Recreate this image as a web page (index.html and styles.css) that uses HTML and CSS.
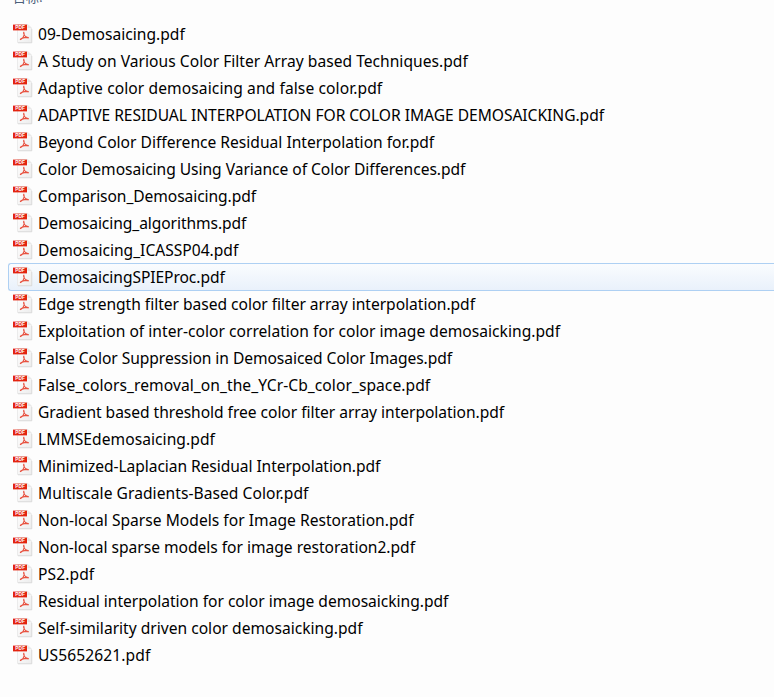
FILE: index.html
```
<!DOCTYPE html>
<html lang="en">
<head>
<meta charset="utf-8">
<title>Files</title>
<link rel="stylesheet" href="styles.css">
</head>
<body>
<svg width="0" height="0" class="defs">
  <defs>
    <linearGradient id="paper" x1="0" y1="0" x2="1" y2="1"><stop offset="0" stop-color="#fff"/><stop offset="1" stop-color="#ededed"/></linearGradient>
    <symbol id="pdf" viewBox="0 0 20 20">
      <path d="M4.5 .5H15L18.5 4V18.5H4.5Z" fill="url(#paper)" stroke="#ebebeb"/>
      <path d="M5 18.8H18.8V5" fill="none" stroke="#d4d4d4" stroke-width=".7"/>
      <path d="M14.5 .5V4H18.5Z" fill="#e6e6e6"/>
      <path d="M0 .6H14V6.4H0Z" fill="#e32410"/>
      <text x="2.3" y="5.2" class="tag">PDF</text>
      <path d="M10.8 8.2C12.2 11 9.8 14.4 7.6 15.6C6.3 15.3 10 13.2 15.2 13.4C16.2 14.6 12 13.4 10.9 10.2C10.4 9 10.4 8.4 10.8 8.2Z" fill="none" stroke="#e8503e" stroke-width="1.05"/>
    </symbol>
  </defs>
</svg>
<header class="heading">目标:</header>
<ul class="files">
  <li><svg class="icon"><use href="#pdf"/></svg><span>09-Demosaicing.pdf</span></li>
  <li><svg class="icon"><use href="#pdf"/></svg><span>A Study on Various Color Filter Array based Techniques.pdf</span></li>
  <li><svg class="icon"><use href="#pdf"/></svg><span>Adaptive color demosaicing and false color.pdf</span></li>
  <li><svg class="icon"><use href="#pdf"/></svg><span>ADAPTIVE RESIDUAL INTERPOLATION FOR COLOR IMAGE DEMOSAICKING.pdf</span></li>
  <li><svg class="icon"><use href="#pdf"/></svg><span>Beyond Color Difference Residual Interpolation for.pdf</span></li>
  <li><svg class="icon"><use href="#pdf"/></svg><span>Color Demosaicing Using Variance of Color Differences.pdf</span></li>
  <li><svg class="icon"><use href="#pdf"/></svg><span>Comparison_Demosaicing.pdf</span></li>
  <li><svg class="icon"><use href="#pdf"/></svg><span>Demosaicing_algorithms.pdf</span></li>
  <li><svg class="icon"><use href="#pdf"/></svg><span>Demosaicing_ICASSP04.pdf</span></li>
  <li class="selected"><svg class="icon"><use href="#pdf"/></svg><span>DemosaicingSPIEProc.pdf</span></li>
  <li><svg class="icon"><use href="#pdf"/></svg><span>Edge strength filter based color filter array interpolation.pdf</span></li>
  <li><svg class="icon"><use href="#pdf"/></svg><span>Exploitation of inter-color correlation for color image demosaicking.pdf</span></li>
  <li><svg class="icon"><use href="#pdf"/></svg><span>False Color Suppression in Demosaiced Color Images.pdf</span></li>
  <li><svg class="icon"><use href="#pdf"/></svg><span>False_colors_removal_on_the_YCr-Cb_color_space.pdf</span></li>
  <li><svg class="icon"><use href="#pdf"/></svg><span>Gradient based threshold free color filter array interpolation.pdf</span></li>
  <li><svg class="icon"><use href="#pdf"/></svg><span>LMMSEdemosaicing.pdf</span></li>
  <li><svg class="icon"><use href="#pdf"/></svg><span>Minimized-Laplacian Residual Interpolation.pdf</span></li>
  <li><svg class="icon"><use href="#pdf"/></svg><span>Multiscale Gradients-Based Color.pdf</span></li>
  <li><svg class="icon"><use href="#pdf"/></svg><span>Non-local Sparse Models for Image Restoration.pdf</span></li>
  <li><svg class="icon"><use href="#pdf"/></svg><span>Non-local sparse models for image restoration2.pdf</span></li>
  <li><svg class="icon"><use href="#pdf"/></svg><span>PS2.pdf</span></li>
  <li><svg class="icon"><use href="#pdf"/></svg><span>Residual interpolation for color image demosaicking.pdf</span></li>
  <li><svg class="icon"><use href="#pdf"/></svg><span>Self-similarity driven color demosaicking.pdf</span></li>
  <li><svg class="icon"><use href="#pdf"/></svg><span>US5652621.pdf</span></li>
</ul>
</body>
</html>
```
FILE: styles.css
```
* { box-sizing: border-box; }
body {
  margin: 0;
  height: 697px;
  overflow: hidden;
  background: #fdfdfd;
  color: #000;
  font: 15.6px/28px "Noto Sans", "Noto Sans CJK SC", sans-serif;
}
.defs { display: block; height: 0; }
.heading {
  display: flex;
  align-items: flex-end;
  height: 7px;
  margin-bottom: 13px;
  padding-left: 13px;
  overflow: hidden;
  color: #4c607a;
  font: 13px/20px "Noto Sans CJK SC", sans-serif;
}
.files { list-style: none; margin: 0; padding: 0 0 0 8px; }
.files li {
  height: 27px;
  display: flex;
  align-items: flex-start;
  padding-left: 5px;
  white-space: pre;
}
.icon { width: 20px; height: 20px; flex: none; margin: 4px 5px 0 0; }
.tag { font: bold 4.8px "Liberation Sans", sans-serif; fill: #fff; }
.files .selected {
  height: 28px;
  margin-bottom: -1px;
  padding-left: 4px;
  border: 1px solid #aed0f3;
  border-right: 0;
  border-radius: 3px 0 0 3px;
  background: linear-gradient(#fafcfe, #e9f1fb);
  line-height: 26px;
}
.selected .icon { margin-top: 3px; }

/* Per-name tracking */
li:nth-child(2), li:nth-child(12) { letter-spacing: .02px; }
li:nth-child(3) { letter-spacing: .09px; }
li:nth-child(4), li:nth-child(11) { letter-spacing: -.03px; }
li:nth-child(6), li:nth-child(15) { letter-spacing: -.04px; }
li:nth-child(7), li:nth-child(8) { letter-spacing: -.08px; }
li:nth-child(10), li:nth-child(17) { letter-spacing: -.07px; }
li:nth-child(13) { letter-spacing: -.06px; }
li:nth-child(14), li:nth-child(16) { letter-spacing: .06px; }
li:nth-child(18) { letter-spacing: .05px; }
li:nth-child(19) { letter-spacing: .02px; }
li:nth-child(20), li:nth-child(22) { letter-spacing: -.02px; }
li:nth-child(21), li:nth-child(24) { letter-spacing: .1px; }
```
